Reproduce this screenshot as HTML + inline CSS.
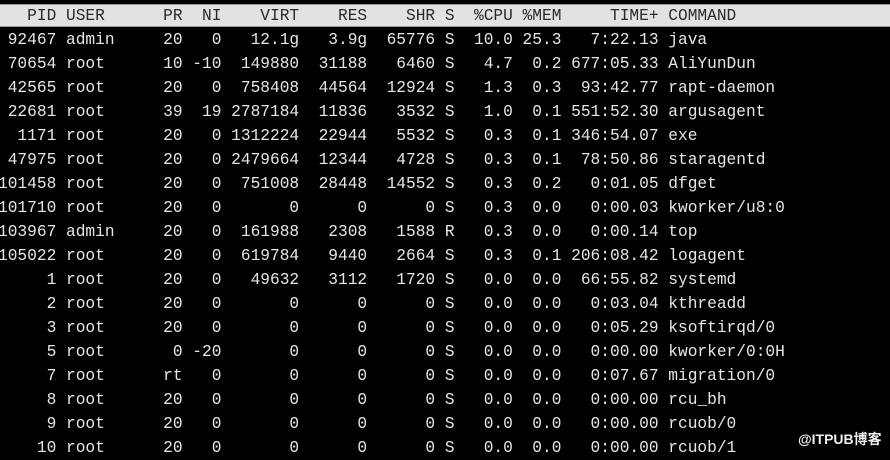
<!DOCTYPE html>
<html><head><meta charset="utf-8"><style>
html,body{margin:0;padding:0;background:#000;width:890px;height:453px;overflow:hidden}
pre{position:absolute;left:-2px;top:4px;margin:0;font-family:"Liberation Mono",monospace;font-size:16.2px;line-height:24px;color:#e6e6e6;white-space:pre}
.band{position:absolute;left:0;top:4px;width:890px;height:21px;background:#e2e2e2;border-top:1px solid #999;border-bottom:1px solid #999}
.hd{color:#2a2a2a}
.wm{position:absolute;left:798px;top:429px;font-family:"Liberation Sans","Noto Sans CJK SC",sans-serif;font-size:14px;font-weight:bold;color:#f0f0f0}
</style></head><body>
<div class="band"></div>
<pre><span class="hd">   PID USER      PR  NI    VIRT    RES    SHR S  %CPU %MEM     TIME+ COMMAND</span>
 92467 admin     20   0   12.1g   3.9g  65776 S  10.0 25.3   7:22.13 java
 70654 root      10 -10  149880  31188   6460 S   4.7  0.2 677:05.33 AliYunDun
 42565 root      20   0  758408  44564  12924 S   1.3  0.3  93:42.77 rapt-daemon
 22681 root      39  19 2787184  11836   3532 S   1.0  0.1 551:52.30 argusagent
  1171 root      20   0 1312224  22944   5532 S   0.3  0.1 346:54.07 exe
 47975 root      20   0 2479664  12344   4728 S   0.3  0.1  78:50.86 staragentd
101458 root      20   0  751008  28448  14552 S   0.3  0.2   0:01.05 dfget
101710 root      20   0       0      0      0 S   0.3  0.0   0:00.03 kworker/u8:0
103967 admin     20   0  161988   2308   1588 R   0.3  0.0   0:00.14 top
105022 root      20   0  619784   9440   2664 S   0.3  0.1 206:08.42 logagent
     1 root      20   0   49632   3112   1720 S   0.0  0.0  66:55.82 systemd
     2 root      20   0       0      0      0 S   0.0  0.0   0:03.04 kthreadd
     3 root      20   0       0      0      0 S   0.0  0.0   0:05.29 ksoftirqd/0
     5 root       0 -20       0      0      0 S   0.0  0.0   0:00.00 kworker/0:0H
     7 root      rt   0       0      0      0 S   0.0  0.0   0:07.67 migration/0
     8 root      20   0       0      0      0 S   0.0  0.0   0:00.00 rcu_bh
     9 root      20   0       0      0      0 S   0.0  0.0   0:00.00 rcuob/0
    10 root      20   0       0      0      0 S   0.0  0.0   0:00.00 rcuob/1</pre>
<div class="wm">@ITPUB博客</div>
</body></html>
